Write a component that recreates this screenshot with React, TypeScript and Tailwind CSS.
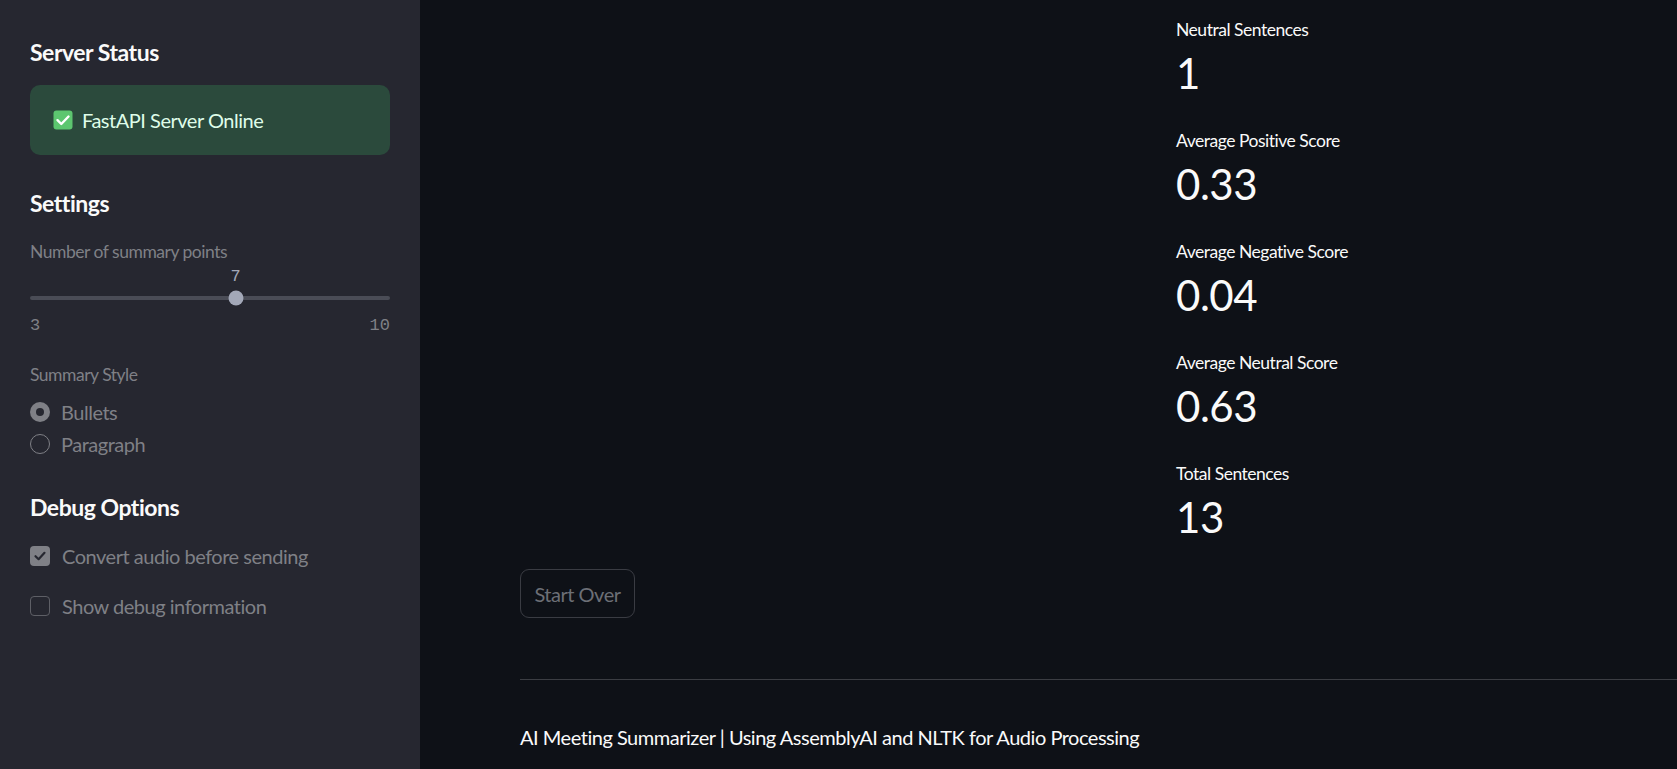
import React from "react";

const metrics = [
  { label: "Neutral Sentences", value: "1" },
  { label: "Average Positive Score", value: "0.33" },
  { label: "Average Negative Score", value: "0.04" },
  { label: "Average Neutral Score", value: "0.63" },
  { label: "Total Sentences", value: "13" },
];

const CheckEmoji = () => (
  <svg width="20" height="20" viewBox="0 0 20 20">
    <rect x="0.5" y="0.5" width="19" height="19" rx="3" fill="#5cc66f" />
    <path d="M4.5 10.2 L8.3 14 L15.5 6.5" stroke="#ffffff" strokeWidth="2.4" fill="none" strokeLinecap="round" strokeLinejoin="round" />
  </svg>
);

const Checkbox = ({ checked, label }: { checked: boolean; label: string }) => (
  <div className="flex h-[30px] items-center gap-3">
    {checked ? (
      <div className="flex h-5 w-5 items-center justify-center rounded-[4px] bg-[#7f8086]">
        <svg width="14" height="14" viewBox="0 0 14 14">
          <path d="M2.5 7.2 L5.6 10.2 L11.5 3.8" stroke="#262730" strokeWidth="2.2" fill="none" strokeLinecap="round" strokeLinejoin="round" />
        </svg>
      </div>
    ) : (
      <div className="h-5 w-5 rounded-[4px] border border-[#5e5f66]" />
    )}
    <span className="text-[20px] text-[#7f8086]">{label}</span>
  </div>
);

const Radio = ({ checked, label }: { checked: boolean; label: string }) => (
  <div className="flex h-[32px] items-center gap-[11px]">
    {checked ? (
      <div className="flex h-5 w-5 items-center justify-center rounded-full bg-[#7f8086]">
        <div className="h-[8px] w-[8px] rounded-full bg-[#262730]" />
      </div>
    ) : (
      <div className="h-5 w-5 rounded-full border border-[#7f8086]" />
    )}
    <span className="text-[20px] text-[#7f8086]">{label}</span>
  </div>
);

const Sidebar = () => (
  <aside className="flex w-[420px] shrink-0 flex-col bg-[#262730] px-[30px] pt-[37px]">
    <h3 className="text-[23px] font-bold leading-[30px] text-[#fafafa]">Server Status</h3>
    <div className="mt-[18px] flex h-[70px] items-center gap-[9px] rounded-[10px] bg-[#2b4a3c] px-[23px]">
      <CheckEmoji />
      <span className="text-[20px] text-[#dffde9]">FastAPI Server Online</span>
    </div>

    <h3 className="mt-[33px] text-[23px] font-bold leading-[30px] text-[#fafafa]">Settings</h3>
    <p className="mt-[23px] text-[17.5px] leading-[22px] text-[#7f8086]">Number of summary points</p>
    <div className="mt-[5px]">
      <div className="relative h-[18px]">
        <span className="absolute left-[57.1%] -translate-x-1/2 font-['Liberation_Mono',monospace] text-[17px] leading-[18px] tracking-normal text-[#a3a8b8]">7</span>
      </div>
      <div className="relative flex h-[24px] items-center">
        <div className="h-[4px] w-full rounded-full bg-[#4a4c56]" />
        <div className="absolute left-[57.1%] top-1/2 h-[15px] w-[15px] -translate-x-1/2 -translate-y-1/2 rounded-full bg-[#a3a8b8]" />
      </div>
      <div className="mt-[7px] flex justify-between font-['Liberation_Mono',monospace] text-[17px] leading-[18px] tracking-normal text-[#7f8086]">
        <span>3</span>
        <span>10</span>
      </div>
    </div>

    <p className="mt-[29px] text-[17.5px] leading-[22px] text-[#7f8086]">Summary Style</p>
    <div className="mt-[10px] flex flex-col">
      <Radio checked label="Bullets" />
      <Radio checked={false} label="Paragraph" />
    </div>

    <h3 className="mt-[32px] text-[23px] font-bold leading-[30px] text-[#fafafa]">Debug Options</h3>
    <div className="mt-[19px] flex flex-col gap-5">
      <Checkbox checked label="Convert audio before sending" />
      <Checkbox checked={false} label="Show debug information" />
    </div>
  </aside>
);

export default function App() {
  return (
    <div className="flex h-[769px] w-full overflow-hidden bg-[#0e1117] font-['Lato',sans-serif] tracking-[-0.03em] text-[#fafafa]">
      <Sidebar />
      <main className="flex min-w-0 flex-1 flex-col pl-[100px] pt-[15px]">
        <div className="grid grid-cols-[636px_1fr] gap-x-5">
          <div />
          <div className="flex flex-col gap-[25px]">
            {metrics.map((m) => (
              <div key={m.label} className="flex flex-col">
                <div className="flex h-[30px] items-center text-[17.5px]">{m.label}</div>
                <div className="h-[56px] text-[42px] leading-[56px]">{m.value}</div>
              </div>
            ))}
          </div>
        </div>
        <div className="mt-[24px]">
          <button className="h-[49px] w-[115px] rounded-[9px] border border-[#3a3c43] text-[20px] text-[#6c6f76]">
            Start Over
          </button>
        </div>
        <div className="mt-[61px] h-px w-full bg-[#3b3d43]" />
        <p className="mt-[42px] text-[20px] leading-[30px]">
          AI Meeting Summarizer | Using AssemblyAI and NLTK for Audio Processing
        </p>
      </main>
    </div>
  );
}
